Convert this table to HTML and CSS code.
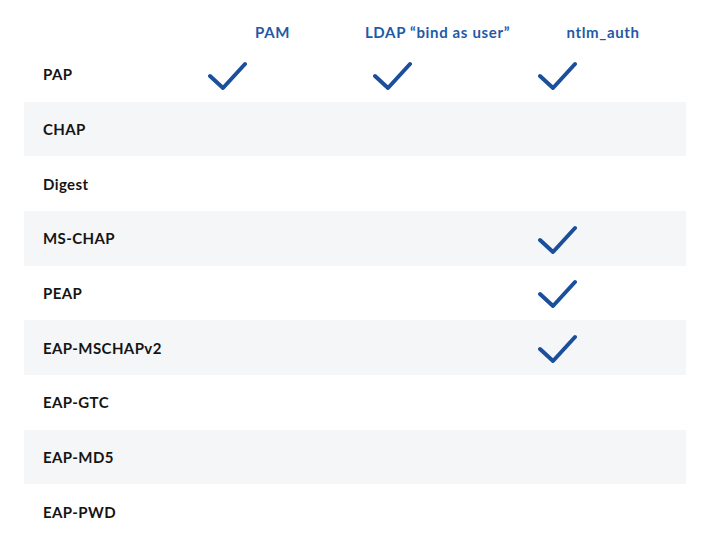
FILE: index.html
```html
<!DOCTYPE html>
<html>
<head>
<meta charset="utf-8">
<link rel="stylesheet" href="styles.css">
</head>
<body>
<div class="table">
  <div class="row head">
    <div class="label"></div>
    <div class="col">PAM</div>
    <div class="col">LDAP “bind as user”</div>
    <div class="col">ntlm_auth</div>
  </div>
  <div class="row">
    <div class="label">PAP</div>
    <div class="cell"><svg class="check" viewBox="0 0 40 30"><polyline points="3,15 16,27 38,3"/></svg></div>
    <div class="cell"><svg class="check" viewBox="0 0 40 30"><polyline points="3,15 16,27 38,3"/></svg></div>
    <div class="cell"><svg class="check" viewBox="0 0 40 30"><polyline points="3,15 16,27 38,3"/></svg></div>
  </div>
  <div class="row alt">
    <div class="label">CHAP</div>
    <div class="cell"></div><div class="cell"></div><div class="cell"></div>
  </div>
  <div class="row">
    <div class="label">Digest</div>
    <div class="cell"></div><div class="cell"></div><div class="cell"></div>
  </div>
  <div class="row alt">
    <div class="label">MS-CHAP</div>
    <div class="cell"></div><div class="cell"></div>
    <div class="cell"><svg class="check" viewBox="0 0 40 30"><polyline points="3,15 16,27 38,3"/></svg></div>
  </div>
  <div class="row">
    <div class="label">PEAP</div>
    <div class="cell"></div><div class="cell"></div>
    <div class="cell"><svg class="check" viewBox="0 0 40 30"><polyline points="3,15 16,27 38,3"/></svg></div>
  </div>
  <div class="row alt">
    <div class="label">EAP-MSCHAPv2</div>
    <div class="cell"></div><div class="cell"></div>
    <div class="cell"><svg class="check" viewBox="0 0 40 30"><polyline points="3,15 16,27 38,3"/></svg></div>
  </div>
  <div class="row">
    <div class="label">EAP-GTC</div>
    <div class="cell"></div><div class="cell"></div><div class="cell"></div>
  </div>
  <div class="row alt">
    <div class="label">EAP-MD5</div>
    <div class="cell"></div><div class="cell"></div><div class="cell"></div>
  </div>
  <div class="row">
    <div class="label">EAP-PWD</div>
    <div class="cell"></div><div class="cell"></div><div class="cell"></div>
  </div>
</div>
</body>
</html>
```
FILE: styles.css
```css
html, body {
  margin: 0;
  padding: 0;
  background: #ffffff;
}
body {
  font-family: "Lato", "Noto Sans", sans-serif;
  overflow: hidden;
}
.table {
  width: 662px;
  margin-left: 24px;
}
.row {
  display: grid;
  grid-template-columns: 166px 165px 165px 166px;
  height: 54.67px;
  align-items: center;
}
.row.head {
  height: 47px;
  align-items: start;
}
.row.alt {
  background: #f4f6f8;
}
.label {
  padding-left: 19px;
  font-size: 15px;
  font-weight: 700;
  letter-spacing: 0.4px;
  color: #151515;
}
.col {
  padding-top: 23px;
  text-align: center;
  font-size: 15px;
  font-weight: 700;
  letter-spacing: 0.65px;
  color: #1f5aa6;
  line-height: 18px;
}
.cell {
  display: flex;
  align-items: center;
  padding-left: 17px;
  height: 100%;
}
.check {
  width: 40px;
  height: 30px;
  margin-top: 3px;
}
.check polyline {
  fill: none;
  stroke: #1b4f9b;
  stroke-width: 4;
  stroke-linecap: round;
  stroke-linejoin: round;
}
```
